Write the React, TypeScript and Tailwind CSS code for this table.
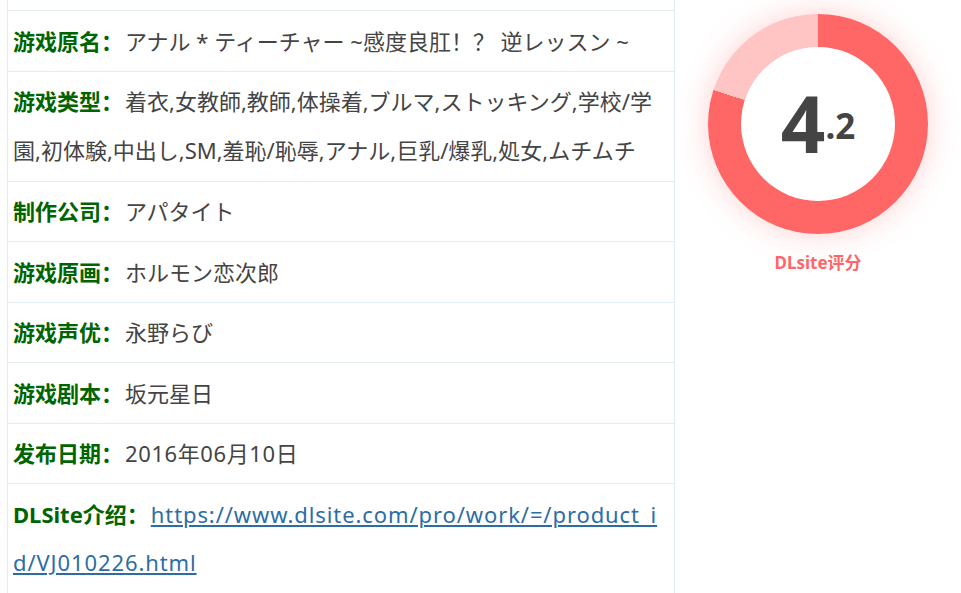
import React from "react";

const rows: { label: string; value: React.ReactNode }[] = [
  { label: "游戏原名：", value: "アナル * ティーチャー ~感度良肛！？ 逆レッスン ~" },
  {
    label: "游戏类型：",
    value:
      "着衣,女教師,教師,体操着,ブルマ,ストッキング,学校/学園,初体験,中出し,SM,羞恥/恥辱,アナル,巨乳/爆乳,処女,ムチムチ",
  },
  { label: "制作公司：", value: "アパタイト" },
  { label: "游戏原画：", value: "ホルモン恋次郎" },
  { label: "游戏声优：", value: "永野らび" },
  { label: "游戏剧本：", value: "坂元星日" },
  { label: "发布日期：", value: <span className="tracking-[0.6px]">2016年06月10日</span> },
  {
    label: "DLSite介绍：",
    value: (
      <a href="#" className="text-[#2e6da4] underline break-all tracking-[0.9px]">
        https://www.dlsite.com/pro/work/=/product_id/VJ010226.html
      </a>
    ),
  },
];

export default function App() {
  return (
    <div
      className="flex w-[961px] h-[593px] overflow-hidden bg-white"
      style={{ fontFamily: '"Noto Sans", "Noto Sans CJK SC", sans-serif' }}
    >
      <div className="ml-[7px] w-[668px] shrink-0 border-x border-[#e3ebf3] h-full">
        <div className="h-[11px] border-b border-[#e3ebf3]" />
        {rows.map((r, i) => (
          <div
            key={i}
            className={
              "border-b border-[#e3ebf3] pl-[5px] pr-[6px] pt-[5.5px] text-[22px] leading-[48.5px] text-[#444] " +
              (i === 1 ? "pb-[6.5px]" : i === rows.length - 1 ? "pb-[20px]" : "pb-[5.5px]")
            }
          >
            <span className="font-bold text-[#006400] mr-[2px]">{r.label}</span>
            {r.value}
          </div>
        ))}
      </div>
      <div className="flex-1 flex flex-col items-center pt-[14px]">
        <div className="w-[220px] h-[220px] rounded-full bg-[conic-gradient(#ff6666_0_80%,#ffc4c4_80%_100%)] shadow-[0_0_30px_rgba(255,102,102,0.3)] flex items-center justify-center">
          <div className="w-[154px] h-[154px] rounded-full bg-white flex items-center justify-center">
            <div className="font-bold text-[#444] leading-none mb-[2px] whitespace-nowrap">
              <span className="text-[78px] align-baseline">4</span>
              <span className="text-[35px] align-[14px]">.2</span>
            </div>
          </div>
        </div>
        <div className="mt-[16px] text-[17px] font-bold text-[#ff6666]">DLsite评分</div>
      </div>
    </div>
  );
}
